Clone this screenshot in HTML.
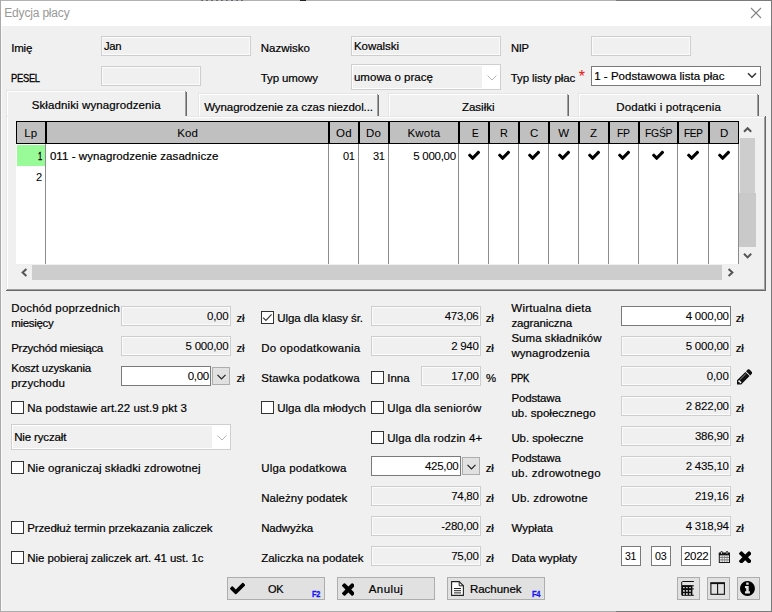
<!DOCTYPE html>
<html lang="pl"><head><meta charset="utf-8"><title>Edycja płacy</title>
<style>html,body{margin:0;padding:0;background:#f0f0f0;overflow:hidden}body{width:772px;height:612px;position:relative}</style></head><body>
<div style="position:absolute;left:0;top:0;width:772px;height:612px;background:#f0f0f0;overflow:hidden">
<div style="position:absolute;left:0px;top:0px;width:772px;height:26px;background:#fff"></div>
<div style="position:absolute;left:0px;top:0px;width:616px;height:1px;background:#b2b2b2"></div>
<div style="position:absolute;left:616px;top:0px;width:156px;height:1px;background:#7b7b7b"></div>
<div style="position:absolute;left:300px;top:0px;width:6px;height:1px;background:#222"></div>
<div style="position:absolute;left:201px;top:0px;width:44px;height:1px;background:repeating-linear-gradient(90deg,#6a6a78 0 2px,#b2b2b2 2px 5px)"></div>
<div style="position:absolute;left:771px;top:0px;width:1px;height:612px;background:#7b7b7b"></div>
<div style="position:absolute;left:0px;top:0px;width:1px;height:612px;background:#a9a9a9"></div>
<div style="position:absolute;left:1px;top:26px;width:1px;height:585px;background:#fafafa"></div>
<div style="position:absolute;left:0px;top:611px;width:616px;height:1px;background:#adadad"></div>
<div style="position:absolute;left:616px;top:611px;width:156px;height:1px;background:#7b7b7b"></div>
<div style="position:absolute;left:4.30px;top:6px;font:normal 12px/14px 'Liberation Sans', sans-serif;letter-spacing:-0.181px;white-space:nowrap;color:#999;-webkit-text-stroke:0.00px #999;">Edycja płacy</div>
<svg style="position:absolute;left:750px;top:7px" width="12" height="12" viewBox="0 0 12 12"><path d="M1 1 L11 11 M11 1 L1 11" stroke="#858585" stroke-width="1.1" fill="none"/></svg>
<div style="position:absolute;left:11.20px;top:41px;font:normal 11.5px/14px 'Liberation Sans', sans-serif;letter-spacing:-0.171px;white-space:nowrap;color:#000;-webkit-text-stroke:0.20px #000;">Imię</div>
<div style="position:absolute;left:101px;top:36px;width:150px;height:20px;box-sizing:border-box;border:1px solid #cecece;box-shadow:inset 0 0 0 1px #fbfbfb;background:#f0f0f0"></div>
<div style="position:absolute;left:103.95px;top:39px;font:normal 11.5px/14px 'Liberation Sans', sans-serif;letter-spacing:-0.300px;white-space:nowrap;color:#000;-webkit-text-stroke:0.20px #000;transform:scaleX(0.9803);transform-origin:0 0;">Jan</div>
<div style="position:absolute;left:260.70px;top:41px;font:normal 11.5px/14px 'Liberation Sans', sans-serif;letter-spacing:0.010px;white-space:nowrap;color:#000;-webkit-text-stroke:0.20px #000;">Nazwisko</div>
<div style="position:absolute;left:351px;top:36px;width:150px;height:20px;box-sizing:border-box;border:1px solid #cecece;box-shadow:inset 0 0 0 1px #fbfbfb;background:#f0f0f0"></div>
<div style="position:absolute;left:353.95px;top:39px;font:normal 11.5px/14px 'Liberation Sans', sans-serif;letter-spacing:-0.043px;white-space:nowrap;color:#000;-webkit-text-stroke:0.20px #000;">Kowalski</div>
<div style="position:absolute;left:510.70px;top:41px;font:normal 11.5px/14px 'Liberation Sans', sans-serif;letter-spacing:-0.300px;white-space:nowrap;color:#000;-webkit-text-stroke:0.20px #000;transform:scaleX(0.9742);transform-origin:0 0;">NIP</div>
<div style="position:absolute;left:591px;top:36px;width:100px;height:20px;box-sizing:border-box;border:1px solid #cecece;box-shadow:inset 0 0 0 1px #fbfbfb;background:#f0f0f0"></div>
<div style="position:absolute;left:11.20px;top:71px;font:normal 11.5px/14px 'Liberation Sans', sans-serif;letter-spacing:-0.300px;white-space:nowrap;color:#000;-webkit-text-stroke:0.35px #000;transform:scaleX(0.8095);transform-origin:0 0;">PESEL</div>
<div style="position:absolute;left:101px;top:66px;width:100px;height:20px;box-sizing:border-box;border:1px solid #cecece;box-shadow:inset 0 0 0 1px #fbfbfb;background:#f0f0f0"></div>
<div style="position:absolute;left:260.70px;top:71px;font:normal 11.5px/14px 'Liberation Sans', sans-serif;letter-spacing:-0.097px;white-space:nowrap;color:#000;-webkit-text-stroke:0.20px #000;">Typ umowy</div>
<div style="position:absolute;left:351px;top:64px;width:150px;height:26px;box-sizing:border-box;border:1px solid #cfcfcf;background:#fff"></div>
<div style="position:absolute;left:353px;top:66px;width:129px;height:22px;background:#f0f0f0"></div>
<svg style="position:absolute;left:487px;top:75px" width="10" height="6" viewBox="0 0 10 6"><path d="M0.6 0.6 L5 5 L9.4 0.6" stroke="#b5b5b5" stroke-width="1" fill="none"/></svg>
<div style="position:absolute;left:353.95px;top:70px;font:normal 11.5px/14px 'Liberation Sans', sans-serif;letter-spacing:0.033px;white-space:nowrap;color:#000;-webkit-text-stroke:0.20px #000;">umowa o pracę</div>
<div style="position:absolute;left:510.70px;top:71px;font:normal 11.5px/14px 'Liberation Sans', sans-serif;letter-spacing:-0.091px;white-space:nowrap;color:#000;-webkit-text-stroke:0.20px #000;">Typ listy płac</div>
<div style="position:absolute;left:578.80px;top:70px;font:normal 16px/14px 'Liberation Sans', sans-serif;letter-spacing:0.000px;white-space:nowrap;color:#f01010;-webkit-text-stroke:0.00px #f01010;">*</div>
<div style="position:absolute;left:591px;top:66px;width:170px;height:20px;box-sizing:border-box;border:1px solid #7a7a7a;background:#fff"></div>
<div style="position:absolute;left:594.20px;top:69px;font:normal 11.5px/14px 'Liberation Sans', sans-serif;letter-spacing:0.021px;white-space:nowrap;color:#000;-webkit-text-stroke:0.20px #000;">1 - Podstawowa lista płac</div>
<svg style="position:absolute;left:747px;top:72px" width="10" height="7" viewBox="0 0 10 7"><path d="M1 1.2 L5 5.2 L9 1.2" stroke="#303030" stroke-width="1.4" fill="none"/></svg>
<div style="position:absolute;left:6px;top:116px;width:760px;height:175px;background:#f0f0f0"></div>
<div style="position:absolute;left:6px;top:116px;width:758px;height:1px;background:#e6e6e6"></div>
<div style="position:absolute;left:7px;top:117px;width:757px;height:1px;background:#fff"></div>
<div style="position:absolute;left:6px;top:116px;width:1px;height:174px;background:#e6e6e6"></div>
<div style="position:absolute;left:7px;top:117px;width:1px;height:173px;background:#fff"></div>
<div style="position:absolute;left:764px;top:117px;width:1px;height:173px;background:#a0a0a0"></div>
<div style="position:absolute;left:765px;top:116px;width:1px;height:175px;background:#696969"></div>
<div style="position:absolute;left:7px;top:289px;width:758px;height:1px;background:#a0a0a0"></div>
<div style="position:absolute;left:6px;top:290px;width:760px;height:1px;background:#696969"></div>
<div style="position:absolute;left:198px;top:93px;width:181px;height:23px;background:#f0f0f0"></div>
<div style="position:absolute;left:198px;top:93px;width:179px;height:1px;background:#e6e6e6"></div>
<div style="position:absolute;left:199px;top:94px;width:178px;height:1px;background:#fff"></div>
<div style="position:absolute;left:198px;top:93px;width:1px;height:23px;background:#e6e6e6"></div>
<div style="position:absolute;left:199px;top:94px;width:1px;height:22px;background:#fff"></div>
<div style="position:absolute;left:377px;top:94px;width:1px;height:22px;background:#a0a0a0"></div>
<div style="position:absolute;left:378px;top:95px;width:1px;height:21px;background:#696969"></div>
<div style="position:absolute;left:388px;top:93px;width:181px;height:23px;background:#f0f0f0"></div>
<div style="position:absolute;left:388px;top:93px;width:179px;height:1px;background:#e6e6e6"></div>
<div style="position:absolute;left:389px;top:94px;width:178px;height:1px;background:#fff"></div>
<div style="position:absolute;left:388px;top:93px;width:1px;height:23px;background:#e6e6e6"></div>
<div style="position:absolute;left:389px;top:94px;width:1px;height:22px;background:#fff"></div>
<div style="position:absolute;left:567px;top:94px;width:1px;height:22px;background:#a0a0a0"></div>
<div style="position:absolute;left:568px;top:95px;width:1px;height:21px;background:#696969"></div>
<div style="position:absolute;left:578px;top:93px;width:181px;height:23px;background:#f0f0f0"></div>
<div style="position:absolute;left:578px;top:93px;width:179px;height:1px;background:#e6e6e6"></div>
<div style="position:absolute;left:579px;top:94px;width:178px;height:1px;background:#fff"></div>
<div style="position:absolute;left:578px;top:93px;width:1px;height:23px;background:#e6e6e6"></div>
<div style="position:absolute;left:579px;top:94px;width:1px;height:22px;background:#fff"></div>
<div style="position:absolute;left:757px;top:94px;width:1px;height:22px;background:#a0a0a0"></div>
<div style="position:absolute;left:758px;top:95px;width:1px;height:21px;background:#696969"></div>
<div style="position:absolute;left:6px;top:90px;width:181px;height:26px;background:#f0f0f0"></div>
<div style="position:absolute;left:6px;top:90px;width:179px;height:1px;background:#e6e6e6"></div>
<div style="position:absolute;left:7px;top:91px;width:178px;height:1px;background:#fff"></div>
<div style="position:absolute;left:6px;top:90px;width:1px;height:26px;background:#e6e6e6"></div>
<div style="position:absolute;left:7px;top:91px;width:1px;height:25px;background:#fff"></div>
<div style="position:absolute;left:185px;top:91px;width:1px;height:25px;background:#a0a0a0"></div>
<div style="position:absolute;left:186px;top:92px;width:1px;height:24px;background:#696969"></div>
<div style="position:absolute;left:8px;top:116px;width:178px;height:2px;background:#f0f0f0"></div>
<div style="position:absolute;left:31.70px;top:98px;font:normal 11.5px/14px 'Liberation Sans', sans-serif;letter-spacing:0.107px;white-space:nowrap;color:#000;-webkit-text-stroke:0.20px #000;">Składniki wynagrodzenia</div>
<div style="position:absolute;left:204.20px;top:100px;font:normal 11.5px/14px 'Liberation Sans', sans-serif;letter-spacing:-0.076px;white-space:nowrap;color:#000;-webkit-text-stroke:0.20px #000;">Wynagrodzenie za czas niezdol...</div>
<div style="position:absolute;left:461.95px;top:100px;font:normal 11.5px/14px 'Liberation Sans', sans-serif;letter-spacing:-0.006px;white-space:nowrap;color:#000;-webkit-text-stroke:0.20px #000;">Zasiłki</div>
<div style="position:absolute;left:616.20px;top:100px;font:normal 11.5px/14px 'Liberation Sans', sans-serif;letter-spacing:0.157px;white-space:nowrap;color:#000;-webkit-text-stroke:0.20px #000;">Dodatki i potrącenia</div>
<div style="position:absolute;left:16px;top:121px;width:723px;height:143px;background:#fff"></div>
<div style="position:absolute;left:16px;top:121px;width:30px;height:23px;box-sizing:border-box;border:1px solid #000;background:#c0c0c0"></div>
<div style="position:absolute;left:24.20px;top:126px;font:normal 11.5px/14px 'Liberation Sans', sans-serif;letter-spacing:0.252px;white-space:nowrap;color:#000;-webkit-text-stroke:0.05px #000;">Lp</div>
<div style="position:absolute;left:45px;top:144px;width:1px;height:120px;background:#8c8c8c"></div>
<div style="position:absolute;left:46px;top:121px;width:283px;height:23px;box-sizing:border-box;border:1px solid #000;background:#c0c0c0"></div>
<div style="position:absolute;left:177.30px;top:126px;font:normal 11.5px/14px 'Liberation Sans', sans-serif;letter-spacing:0.077px;white-space:nowrap;color:#000;-webkit-text-stroke:0.05px #000;">Kod</div>
<div style="position:absolute;left:328px;top:144px;width:1px;height:120px;background:#8c8c8c"></div>
<div style="position:absolute;left:329px;top:121px;width:30px;height:23px;box-sizing:border-box;border:1px solid #000;background:#c0c0c0"></div>
<div style="position:absolute;left:335.95px;top:126px;font:normal 11.5px/14px 'Liberation Sans', sans-serif;letter-spacing:0.353px;white-space:nowrap;color:#000;-webkit-text-stroke:0.05px #000;">Od</div>
<div style="position:absolute;left:358px;top:144px;width:1px;height:120px;background:#8c8c8c"></div>
<div style="position:absolute;left:359px;top:121px;width:30px;height:23px;box-sizing:border-box;border:1px solid #000;background:#c0c0c0"></div>
<div style="position:absolute;left:365.95px;top:126px;font:normal 11.5px/14px 'Liberation Sans', sans-serif;letter-spacing:0.173px;white-space:nowrap;color:#000;-webkit-text-stroke:0.05px #000;">Do</div>
<div style="position:absolute;left:388px;top:144px;width:1px;height:120px;background:#8c8c8c"></div>
<div style="position:absolute;left:389px;top:121px;width:70px;height:23px;box-sizing:border-box;border:1px solid #000;background:#c0c0c0"></div>
<div style="position:absolute;left:407.45px;top:126px;font:normal 11.5px/14px 'Liberation Sans', sans-serif;letter-spacing:0.216px;white-space:nowrap;color:#000;-webkit-text-stroke:0.05px #000;">Kwota</div>
<div style="position:absolute;left:458px;top:144px;width:1px;height:120px;background:#8c8c8c"></div>
<div style="position:absolute;left:459px;top:121px;width:30px;height:23px;box-sizing:border-box;border:1px solid #000;background:#c0c0c0"></div>
<div style="position:absolute;left:471.70px;top:126px;font:normal 11.5px/14px 'Liberation Sans', sans-serif;letter-spacing:-0.300px;white-space:nowrap;color:#000;-webkit-text-stroke:0.17px #000;transform:scaleX(0.8546);transform-origin:0 0;">E</div>
<div style="position:absolute;left:488px;top:144px;width:1px;height:120px;background:#8c8c8c"></div>
<div style="position:absolute;left:489px;top:121px;width:30px;height:23px;box-sizing:border-box;border:1px solid #000;background:#c0c0c0"></div>
<div style="position:absolute;left:499.95px;top:126px;font:normal 11.5px/14px 'Liberation Sans', sans-serif;letter-spacing:-0.300px;white-space:nowrap;color:#000;-webkit-text-stroke:0.05px #000;transform:scaleX(0.9423);transform-origin:0 0;">R</div>
<div style="position:absolute;left:518px;top:144px;width:1px;height:120px;background:#8c8c8c"></div>
<div style="position:absolute;left:519px;top:121px;width:30px;height:23px;box-sizing:border-box;border:1px solid #000;background:#c0c0c0"></div>
<div style="position:absolute;left:529.95px;top:126px;font:normal 11.5px/14px 'Liberation Sans', sans-serif;letter-spacing:-0.262px;white-space:nowrap;color:#000;-webkit-text-stroke:0.05px #000;">C</div>
<div style="position:absolute;left:548px;top:144px;width:1px;height:120px;background:#8c8c8c"></div>
<div style="position:absolute;left:549px;top:121px;width:30px;height:23px;box-sizing:border-box;border:1px solid #000;background:#c0c0c0"></div>
<div style="position:absolute;left:558.20px;top:126px;font:normal 11.5px/14px 'Liberation Sans', sans-serif;letter-spacing:0.191px;white-space:nowrap;color:#000;-webkit-text-stroke:0.05px #000;">W</div>
<div style="position:absolute;left:578px;top:144px;width:1px;height:120px;background:#8c8c8c"></div>
<div style="position:absolute;left:579px;top:121px;width:30px;height:23px;box-sizing:border-box;border:1px solid #000;background:#c0c0c0"></div>
<div style="position:absolute;left:589.95px;top:126px;font:normal 11.5px/14px 'Liberation Sans', sans-serif;letter-spacing:0.019px;white-space:nowrap;color:#000;-webkit-text-stroke:0.05px #000;">Z</div>
<div style="position:absolute;left:608px;top:144px;width:1px;height:120px;background:#8c8c8c"></div>
<div style="position:absolute;left:609px;top:121px;width:30px;height:23px;box-sizing:border-box;border:1px solid #000;background:#c0c0c0"></div>
<div style="position:absolute;left:616.95px;top:126px;font:normal 11.5px/14px 'Liberation Sans', sans-serif;letter-spacing:-0.300px;white-space:nowrap;color:#000;-webkit-text-stroke:0.05px #000;transform:scaleX(0.9076);transform-origin:0 0;">FP</div>
<div style="position:absolute;left:638px;top:144px;width:1px;height:120px;background:#8c8c8c"></div>
<div style="position:absolute;left:639px;top:121px;width:39px;height:23px;box-sizing:border-box;border:1px solid #000;background:#c0c0c0"></div>
<div style="position:absolute;left:644.90px;top:126px;font:normal 11.5px/14px 'Liberation Sans', sans-serif;letter-spacing:-0.300px;white-space:nowrap;color:#000;-webkit-text-stroke:0.05px #000;transform:scaleX(0.9066);transform-origin:0 0;">FGŚP</div>
<div style="position:absolute;left:677px;top:144px;width:1px;height:120px;background:#8c8c8c"></div>
<div style="position:absolute;left:678px;top:121px;width:31px;height:23px;box-sizing:border-box;border:1px solid #000;background:#c0c0c0"></div>
<div style="position:absolute;left:684.10px;top:126px;font:normal 11.5px/14px 'Liberation Sans', sans-serif;letter-spacing:-0.300px;white-space:nowrap;color:#000;-webkit-text-stroke:0.16px #000;transform:scaleX(0.8615);transform-origin:0 0;">FEP</div>
<div style="position:absolute;left:708px;top:144px;width:1px;height:120px;background:#8c8c8c"></div>
<div style="position:absolute;left:709px;top:121px;width:30px;height:23px;box-sizing:border-box;border:1px solid #000;background:#c0c0c0"></div>
<div style="position:absolute;left:719.95px;top:126px;font:normal 11.5px/14px 'Liberation Sans', sans-serif;letter-spacing:-0.262px;white-space:nowrap;color:#000;-webkit-text-stroke:0.05px #000;">D</div>
<div style="position:absolute;left:738px;top:144px;width:1px;height:120px;background:#8c8c8c"></div>
<div style="position:absolute;left:17px;top:145px;width:28px;height:21px;background:#98fb98"></div>
<div style="position:absolute;left:37.70px;top:149px;font:normal 11.5px/14px 'Liberation Sans', sans-serif;letter-spacing:-0.300px;white-space:nowrap;color:#000;-webkit-text-stroke:0.36px #000;transform:scaleX(0.6551);transform-origin:0 0;">1</div>
<div style="position:absolute;left:36.10px;top:170px;font:normal 11.5px/14px 'Liberation Sans', sans-serif;letter-spacing:-0.300px;white-space:nowrap;color:#000;-webkit-text-stroke:0.08px #000;transform:scaleX(0.9662);transform-origin:0 0;">2</div>
<div style="position:absolute;left:49.90px;top:149px;font:normal 11.5px/14px 'Liberation Sans', sans-serif;letter-spacing:0.065px;white-space:nowrap;color:#000;-webkit-text-stroke:0.20px #000;">011 - wynagrodzenie zasadnicze</div>
<div style="position:absolute;left:342.80px;top:149px;font:normal 11.5px/14px 'Liberation Sans', sans-serif;letter-spacing:-0.300px;white-space:nowrap;color:#000;-webkit-text-stroke:0.08px #000;transform:scaleX(0.9593);transform-origin:0 0;">01</div>
<div style="position:absolute;left:373.20px;top:149px;font:normal 11.5px/14px 'Liberation Sans', sans-serif;letter-spacing:-0.300px;white-space:nowrap;color:#000;-webkit-text-stroke:0.08px #000;transform:scaleX(0.9593);transform-origin:0 0;">31</div>
<div style="position:absolute;left:413.20px;top:149px;font:normal 11.5px/14px 'Liberation Sans', sans-serif;letter-spacing:-0.258px;white-space:nowrap;color:#000;-webkit-text-stroke:0.08px #000;">5 000,00</div>
<svg style="position:absolute;left:468.00px;top:149.9px" width="12.2" height="9.98" viewBox="121 254 1550 1268"><path d="M1671 566q0 40-28 68l-724 724-136 136q-28 28-68 28t-68-28l-136-136-362-362q-28-28-28-68t28-68l136-136q28-28 68-28t68 28l294 295 656-657q28-28 68-28t68 28l136 136q28 28 28 68z" fill="#000"/></svg>
<svg style="position:absolute;left:498.00px;top:149.9px" width="12.2" height="9.98" viewBox="121 254 1550 1268"><path d="M1671 566q0 40-28 68l-724 724-136 136q-28 28-68 28t-68-28l-136-136-362-362q-28-28-28-68t28-68l136-136q28-28 68-28t68 28l294 295 656-657q28-28 68-28t68 28l136 136q28 28 28 68z" fill="#000"/></svg>
<svg style="position:absolute;left:528.00px;top:149.9px" width="12.2" height="9.98" viewBox="121 254 1550 1268"><path d="M1671 566q0 40-28 68l-724 724-136 136q-28 28-68 28t-68-28l-136-136-362-362q-28-28-28-68t28-68l136-136q28-28 68-28t68 28l294 295 656-657q28-28 68-28t68 28l136 136q28 28 28 68z" fill="#000"/></svg>
<svg style="position:absolute;left:558.00px;top:149.9px" width="12.2" height="9.98" viewBox="121 254 1550 1268"><path d="M1671 566q0 40-28 68l-724 724-136 136q-28 28-68 28t-68-28l-136-136-362-362q-28-28-28-68t28-68l136-136q28-28 68-28t68 28l294 295 656-657q28-28 68-28t68 28l136 136q28 28 28 68z" fill="#000"/></svg>
<svg style="position:absolute;left:588.00px;top:149.9px" width="12.2" height="9.98" viewBox="121 254 1550 1268"><path d="M1671 566q0 40-28 68l-724 724-136 136q-28 28-68 28t-68-28l-136-136-362-362q-28-28-28-68t28-68l136-136q28-28 68-28t68 28l294 295 656-657q28-28 68-28t68 28l136 136q28 28 28 68z" fill="#000"/></svg>
<svg style="position:absolute;left:618.00px;top:149.9px" width="12.2" height="9.98" viewBox="121 254 1550 1268"><path d="M1671 566q0 40-28 68l-724 724-136 136q-28 28-68 28t-68-28l-136-136-362-362q-28-28-28-68t28-68l136-136q28-28 68-28t68 28l294 295 656-657q28-28 68-28t68 28l136 136q28 28 28 68z" fill="#000"/></svg>
<svg style="position:absolute;left:651.60px;top:149.9px" width="12.2" height="9.98" viewBox="121 254 1550 1268"><path d="M1671 566q0 40-28 68l-724 724-136 136q-28 28-68 28t-68-28l-136-136-362-362q-28-28-28-68t28-68l136-136q28-28 68-28t68 28l294 295 656-657q28-28 68-28t68 28l136 136q28 28 28 68z" fill="#000"/></svg>
<svg style="position:absolute;left:686.60px;top:149.9px" width="12.2" height="9.98" viewBox="121 254 1550 1268"><path d="M1671 566q0 40-28 68l-724 724-136 136q-28 28-68 28t-68-28l-136-136-362-362q-28-28-28-68t28-68l136-136q28-28 68-28t68 28l294 295 656-657q28-28 68-28t68 28l136 136q28 28 28 68z" fill="#000"/></svg>
<svg style="position:absolute;left:718.00px;top:149.9px" width="12.2" height="9.98" viewBox="121 254 1550 1268"><path d="M1671 566q0 40-28 68l-724 724-136 136q-28 28-68 28t-68-28l-136-136-362-362q-28-28-28-68t28-68l136-136q28-28 68-28t68 28l294 295 656-657q28-28 68-28t68 28l136 136q28 28 28 68z" fill="#000"/></svg>
<div style="position:absolute;left:739px;top:121px;width:17px;height:143px;background:#f0f0f0"></div>
<div style="position:absolute;left:740px;top:138px;width:15px;height:55px;background:#cdcdcd"></div>
<div style="position:absolute;left:739px;top:193px;width:17px;height:54px;background:#c9c9c9"></div>
<svg style="position:absolute;left:743px;top:126px" width="9" height="7" viewBox="0 0 9 7"><path d="M1 5.8 L4.6 2.2 L8.2 5.8" stroke="#555" stroke-width="2" fill="none"/></svg>
<svg style="position:absolute;left:743px;top:252px" width="9" height="8" viewBox="0 0 9 8"><path d="M1 1.8 L4.6 5.4 L8.2 1.8" stroke="#555" stroke-width="2" fill="none"/></svg>
<div style="position:absolute;left:16px;top:264px;width:740px;height:17px;background:#f0f0f0"></div>
<div style="position:absolute;left:32px;top:265px;width:690px;height:15px;background:#cdcdcd"></div>
<svg style="position:absolute;left:20px;top:268px" width="8" height="9" viewBox="0 0 8 9"><path d="M6.4 0.9 L2.6 4.5 L6.4 8.1" stroke="#555" stroke-width="2" fill="none"/></svg>
<svg style="position:absolute;left:727px;top:268px" width="8" height="9" viewBox="0 0 8 9"><path d="M1.6 0.9 L5.4 4.5 L1.6 8.1" stroke="#555" stroke-width="2" fill="none"/></svg>
<div style="position:absolute;left:11.20px;top:301px;font:normal 11.5px/14px 'Liberation Sans', sans-serif;letter-spacing:0.183px;white-space:nowrap;color:#000;-webkit-text-stroke:0.20px #000;">Dochód poprzednich</div>
<div style="position:absolute;left:11.20px;top:316px;font:normal 11.5px/14px 'Liberation Sans', sans-serif;letter-spacing:-0.300px;white-space:nowrap;color:#000;-webkit-text-stroke:0.20px #000;">miesięcy</div>
<div style="position:absolute;left:121px;top:306px;width:110px;height:20px;box-sizing:border-box;border:1px solid #cecece;box-shadow:inset 0 0 0 1px #fbfbfb;background:#f0f0f0"></div>
<div style="position:absolute;left:207.00px;top:309px;font:normal 11.5px/14px 'Liberation Sans', sans-serif;letter-spacing:-0.248px;white-space:nowrap;color:#000;-webkit-text-stroke:0.08px #000;">0,00</div>
<div style="position:absolute;left:236.45px;top:311px;font:normal 11.5px/14px 'Liberation Sans', sans-serif;letter-spacing:-0.156px;white-space:nowrap;color:#000;-webkit-text-stroke:0.20px #000;">zł</div>
<div style="position:absolute;left:11.20px;top:341px;font:normal 11.5px/14px 'Liberation Sans', sans-serif;letter-spacing:-0.277px;white-space:nowrap;color:#000;-webkit-text-stroke:0.20px #000;">Przychód miesiąca</div>
<div style="position:absolute;left:121px;top:336px;width:110px;height:20px;box-sizing:border-box;border:1px solid #cecece;box-shadow:inset 0 0 0 1px #fbfbfb;background:#f0f0f0"></div>
<div style="position:absolute;left:185.60px;top:339px;font:normal 11.5px/14px 'Liberation Sans', sans-serif;letter-spacing:-0.246px;white-space:nowrap;color:#000;-webkit-text-stroke:0.08px #000;">5 000,00</div>
<div style="position:absolute;left:236.45px;top:341px;font:normal 11.5px/14px 'Liberation Sans', sans-serif;letter-spacing:-0.156px;white-space:nowrap;color:#000;-webkit-text-stroke:0.20px #000;">zł</div>
<div style="position:absolute;left:11.20px;top:361px;font:normal 11.5px/14px 'Liberation Sans', sans-serif;letter-spacing:-0.221px;white-space:nowrap;color:#000;-webkit-text-stroke:0.20px #000;">Koszt uzyskania</div>
<div style="position:absolute;left:11.20px;top:376px;font:normal 11.5px/14px 'Liberation Sans', sans-serif;letter-spacing:0.082px;white-space:nowrap;color:#000;-webkit-text-stroke:0.20px #000;">przychodu</div>
<div style="position:absolute;left:121px;top:366px;width:90px;height:20px;box-sizing:border-box;border:1px solid #7a7a7a;background:#fff"></div>
<div style="position:absolute;left:187.70px;top:369px;font:normal 11.5px/14px 'Liberation Sans', sans-serif;letter-spacing:-0.273px;white-space:nowrap;color:#000;-webkit-text-stroke:0.08px #000;">0,00</div>
<div style="position:absolute;left:212px;top:367px;width:18px;height:18px;box-sizing:border-box;border:1px solid #adadad;background:#e1e1e1"><svg width="9" height="6" viewBox="0 0 9 6" style="position:absolute;left:3.7px;top:5.5px"><path d="M0.5 0.8 L4.5 4.8 L8.5 0.8" stroke="#222" stroke-width="1.2" fill="none"/></svg></div>
<div style="position:absolute;left:236.45px;top:371px;font:normal 11.5px/14px 'Liberation Sans', sans-serif;letter-spacing:-0.156px;white-space:nowrap;color:#000;-webkit-text-stroke:0.20px #000;">zł</div>
<div style="position:absolute;left:11px;top:401px;width:13px;height:13px;box-sizing:border-box;border:1px solid #333;background:#fff"></div>
<div style="position:absolute;left:27.20px;top:401px;font:normal 11.5px/14px 'Liberation Sans', sans-serif;letter-spacing:0.040px;white-space:nowrap;color:#000;-webkit-text-stroke:0.20px #000;">Na podstawie art.22 ust.9 pkt 3</div>
<div style="position:absolute;left:11px;top:424px;width:220px;height:26px;box-sizing:border-box;border:1px solid #cfcfcf;background:#fff"></div>
<div style="position:absolute;left:13px;top:426px;width:199px;height:22px;background:#f0f0f0"></div>
<svg style="position:absolute;left:217px;top:435px" width="10" height="6" viewBox="0 0 10 6"><path d="M0.6 0.6 L5 5 L9.4 0.6" stroke="#b5b5b5" stroke-width="1" fill="none"/></svg>
<div style="position:absolute;left:14.20px;top:430px;font:normal 11.5px/14px 'Liberation Sans', sans-serif;letter-spacing:-0.149px;white-space:nowrap;color:#000;-webkit-text-stroke:0.20px #000;">Nie ryczałt</div>
<div style="position:absolute;left:11px;top:461px;width:13px;height:13px;box-sizing:border-box;border:1px solid #333;background:#fff"></div>
<div style="position:absolute;left:27.20px;top:461px;font:normal 11.5px/14px 'Liberation Sans', sans-serif;letter-spacing:0.108px;white-space:nowrap;color:#000;-webkit-text-stroke:0.20px #000;">Nie ograniczaj składki zdrowotnej</div>
<div style="position:absolute;left:11px;top:521px;width:13px;height:13px;box-sizing:border-box;border:1px solid #333;background:#fff"></div>
<div style="position:absolute;left:27.20px;top:521px;font:normal 11.5px/14px 'Liberation Sans', sans-serif;letter-spacing:-0.108px;white-space:nowrap;color:#000;-webkit-text-stroke:0.20px #000;">Przedłuż termin przekazania zaliczek</div>
<div style="position:absolute;left:11px;top:551px;width:13px;height:13px;box-sizing:border-box;border:1px solid #333;background:#fff"></div>
<div style="position:absolute;left:27.20px;top:551px;font:normal 11.5px/14px 'Liberation Sans', sans-serif;letter-spacing:-0.055px;white-space:nowrap;color:#000;-webkit-text-stroke:0.20px #000;">Nie pobieraj zaliczek art. 41 ust. 1c</div>
<div style="position:absolute;left:261px;top:311px;width:13px;height:13px;box-sizing:border-box;border:1px solid #333;background:#fff"><svg width="11" height="11" viewBox="0 0 11 11" style="position:absolute;left:0;top:0"><path d="M1.1 5.6 L3.9 8.4 L9.6 2.3" stroke="#3a3a3a" stroke-width="1.2" fill="none"/></svg></div>
<div style="position:absolute;left:277.20px;top:311px;font:normal 11.5px/14px 'Liberation Sans', sans-serif;letter-spacing:-0.063px;white-space:nowrap;color:#000;-webkit-text-stroke:0.20px #000;">Ulga dla klasy śr.</div>
<div style="position:absolute;left:371px;top:306px;width:110px;height:20px;box-sizing:border-box;border:1px solid #cecece;box-shadow:inset 0 0 0 1px #fbfbfb;background:#f0f0f0"></div>
<div style="position:absolute;left:444.70px;top:309px;font:normal 11.5px/14px 'Liberation Sans', sans-serif;letter-spacing:-0.231px;white-space:nowrap;color:#000;-webkit-text-stroke:0.08px #000;">473,06</div>
<div style="position:absolute;left:485.70px;top:311px;font:normal 11.5px/14px 'Liberation Sans', sans-serif;letter-spacing:-0.156px;white-space:nowrap;color:#000;-webkit-text-stroke:0.20px #000;">zł</div>
<div style="position:absolute;left:261.20px;top:341px;font:normal 11.5px/14px 'Liberation Sans', sans-serif;letter-spacing:0.252px;white-space:nowrap;color:#000;-webkit-text-stroke:0.20px #000;">Do opodatkowania</div>
<div style="position:absolute;left:371px;top:336px;width:110px;height:20px;box-sizing:border-box;border:1px solid #cecece;box-shadow:inset 0 0 0 1px #fbfbfb;background:#f0f0f0"></div>
<div style="position:absolute;left:451.20px;top:339px;font:normal 11.5px/14px 'Liberation Sans', sans-serif;letter-spacing:-0.296px;white-space:nowrap;color:#000;-webkit-text-stroke:0.08px #000;">2 940</div>
<div style="position:absolute;left:485.70px;top:341px;font:normal 11.5px/14px 'Liberation Sans', sans-serif;letter-spacing:-0.156px;white-space:nowrap;color:#000;-webkit-text-stroke:0.20px #000;">zł</div>
<div style="position:absolute;left:261.20px;top:371px;font:normal 11.5px/14px 'Liberation Sans', sans-serif;letter-spacing:0.125px;white-space:nowrap;color:#000;-webkit-text-stroke:0.20px #000;">Stawka podatkowa</div>
<div style="position:absolute;left:371px;top:371px;width:13px;height:13px;box-sizing:border-box;border:1px solid #333;background:#fff"></div>
<div style="position:absolute;left:387.20px;top:371px;font:normal 11.5px/14px 'Liberation Sans', sans-serif;letter-spacing:0.040px;white-space:nowrap;color:#000;-webkit-text-stroke:0.20px #000;">Inna</div>
<div style="position:absolute;left:421px;top:366px;width:60px;height:20px;box-sizing:border-box;border:1px solid #cecece;box-shadow:inset 0 0 0 1px #fbfbfb;background:#f0f0f0"></div>
<div style="position:absolute;left:451.20px;top:369px;font:normal 11.5px/14px 'Liberation Sans', sans-serif;letter-spacing:-0.296px;white-space:nowrap;color:#000;-webkit-text-stroke:0.08px #000;">17,00</div>
<div style="position:absolute;left:485.70px;top:371px;font:normal 11.5px/14px 'Liberation Sans', sans-serif;letter-spacing:-0.300px;white-space:nowrap;color:#000;-webkit-text-stroke:0.20px #000;transform:scaleX(0.9865);transform-origin:0 0;">%</div>
<div style="position:absolute;left:261px;top:401px;width:13px;height:13px;box-sizing:border-box;border:1px solid #333;background:#fff"></div>
<div style="position:absolute;left:277.20px;top:401px;font:normal 11.5px/14px 'Liberation Sans', sans-serif;letter-spacing:0.036px;white-space:nowrap;color:#000;-webkit-text-stroke:0.20px #000;">Ulga dla młodych</div>
<div style="position:absolute;left:371px;top:401px;width:13px;height:13px;box-sizing:border-box;border:1px solid #333;background:#fff"></div>
<div style="position:absolute;left:387.20px;top:401px;font:normal 11.5px/14px 'Liberation Sans', sans-serif;letter-spacing:0.169px;white-space:nowrap;color:#000;-webkit-text-stroke:0.20px #000;">Ulga dla seniorów</div>
<div style="position:absolute;left:371px;top:431px;width:13px;height:13px;box-sizing:border-box;border:1px solid #333;background:#fff"></div>
<div style="position:absolute;left:387.20px;top:431px;font:normal 11.5px/14px 'Liberation Sans', sans-serif;letter-spacing:0.112px;white-space:nowrap;color:#000;-webkit-text-stroke:0.20px #000;">Ulga dla rodzin 4+</div>
<div style="position:absolute;left:261.20px;top:461px;font:normal 11.5px/14px 'Liberation Sans', sans-serif;letter-spacing:0.219px;white-space:nowrap;color:#000;-webkit-text-stroke:0.20px #000;">Ulga podatkowa</div>
<div style="position:absolute;left:371px;top:456px;width:90px;height:20px;box-sizing:border-box;border:1px solid #7a7a7a;background:#fff"></div>
<div style="position:absolute;left:424.95px;top:459px;font:normal 11.5px/14px 'Liberation Sans', sans-serif;letter-spacing:-0.273px;white-space:nowrap;color:#000;-webkit-text-stroke:0.08px #000;">425,00</div>
<div style="position:absolute;left:462px;top:457px;width:18px;height:18px;box-sizing:border-box;border:1px solid #adadad;background:#e1e1e1"><svg width="9" height="6" viewBox="0 0 9 6" style="position:absolute;left:3.7px;top:5.5px"><path d="M0.5 0.8 L4.5 4.8 L8.5 0.8" stroke="#222" stroke-width="1.2" fill="none"/></svg></div>
<div style="position:absolute;left:485.70px;top:461px;font:normal 11.5px/14px 'Liberation Sans', sans-serif;letter-spacing:-0.156px;white-space:nowrap;color:#000;-webkit-text-stroke:0.20px #000;">zł</div>
<div style="position:absolute;left:261.20px;top:491px;font:normal 11.5px/14px 'Liberation Sans', sans-serif;letter-spacing:0.025px;white-space:nowrap;color:#000;-webkit-text-stroke:0.20px #000;">Należny podatek</div>
<div style="position:absolute;left:371px;top:486px;width:110px;height:20px;box-sizing:border-box;border:1px solid #cecece;box-shadow:inset 0 0 0 1px #fbfbfb;background:#f0f0f0"></div>
<div style="position:absolute;left:451.20px;top:489px;font:normal 11.5px/14px 'Liberation Sans', sans-serif;letter-spacing:-0.296px;white-space:nowrap;color:#000;-webkit-text-stroke:0.08px #000;">74,80</div>
<div style="position:absolute;left:485.70px;top:491px;font:normal 11.5px/14px 'Liberation Sans', sans-serif;letter-spacing:-0.156px;white-space:nowrap;color:#000;-webkit-text-stroke:0.20px #000;">zł</div>
<div style="position:absolute;left:261.20px;top:521px;font:normal 11.5px/14px 'Liberation Sans', sans-serif;letter-spacing:-0.158px;white-space:nowrap;color:#000;-webkit-text-stroke:0.20px #000;">Nadwyżka</div>
<div style="position:absolute;left:371px;top:516px;width:110px;height:20px;box-sizing:border-box;border:1px solid #cecece;box-shadow:inset 0 0 0 1px #fbfbfb;background:#f0f0f0"></div>
<div style="position:absolute;left:441.20px;top:519px;font:normal 11.5px/14px 'Liberation Sans', sans-serif;letter-spacing:-0.245px;white-space:nowrap;color:#000;-webkit-text-stroke:0.08px #000;">-280,00</div>
<div style="position:absolute;left:485.70px;top:521px;font:normal 11.5px/14px 'Liberation Sans', sans-serif;letter-spacing:-0.156px;white-space:nowrap;color:#000;-webkit-text-stroke:0.20px #000;">zł</div>
<div style="position:absolute;left:261.20px;top:551px;font:normal 11.5px/14px 'Liberation Sans', sans-serif;letter-spacing:0.000px;white-space:nowrap;color:#000;-webkit-text-stroke:0.20px #000;">Zaliczka na podatek</div>
<div style="position:absolute;left:371px;top:546px;width:110px;height:20px;box-sizing:border-box;border:1px solid #cecece;box-shadow:inset 0 0 0 1px #fbfbfb;background:#f0f0f0"></div>
<div style="position:absolute;left:451.20px;top:549px;font:normal 11.5px/14px 'Liberation Sans', sans-serif;letter-spacing:-0.296px;white-space:nowrap;color:#000;-webkit-text-stroke:0.08px #000;">75,00</div>
<div style="position:absolute;left:485.70px;top:551px;font:normal 11.5px/14px 'Liberation Sans', sans-serif;letter-spacing:-0.156px;white-space:nowrap;color:#000;-webkit-text-stroke:0.20px #000;">zł</div>
<div style="position:absolute;left:511.30px;top:301px;font:normal 11.5px/14px 'Liberation Sans', sans-serif;letter-spacing:0.225px;white-space:nowrap;color:#000;-webkit-text-stroke:0.20px #000;">Wirtualna dieta</div>
<div style="position:absolute;left:511.40px;top:316px;font:normal 11.5px/14px 'Liberation Sans', sans-serif;letter-spacing:-0.129px;white-space:nowrap;color:#000;-webkit-text-stroke:0.20px #000;">zagraniczna</div>
<div style="position:absolute;left:621px;top:306px;width:110px;height:20px;box-sizing:border-box;border:1px solid #7a7a7a;background:#fff"></div>
<div style="position:absolute;left:685.70px;top:309px;font:normal 11.5px/14px 'Liberation Sans', sans-serif;letter-spacing:-0.214px;white-space:nowrap;color:#000;-webkit-text-stroke:0.08px #000;">4 000,00</div>
<div style="position:absolute;left:735.70px;top:311px;font:normal 11.5px/14px 'Liberation Sans', sans-serif;letter-spacing:-0.156px;white-space:nowrap;color:#000;-webkit-text-stroke:0.20px #000;">zł</div>
<div style="position:absolute;left:511.40px;top:331px;font:normal 11.5px/14px 'Liberation Sans', sans-serif;letter-spacing:0.048px;white-space:nowrap;color:#000;-webkit-text-stroke:0.20px #000;">Suma składników</div>
<div style="position:absolute;left:511.40px;top:346px;font:normal 11.5px/14px 'Liberation Sans', sans-serif;letter-spacing:0.065px;white-space:nowrap;color:#000;-webkit-text-stroke:0.20px #000;">wynagrodzenia</div>
<div style="position:absolute;left:621px;top:336px;width:110px;height:20px;box-sizing:border-box;border:1px solid #cecece;box-shadow:inset 0 0 0 1px #fbfbfb;background:#f0f0f0"></div>
<div style="position:absolute;left:685.70px;top:339px;font:normal 11.5px/14px 'Liberation Sans', sans-serif;letter-spacing:-0.214px;white-space:nowrap;color:#000;-webkit-text-stroke:0.08px #000;">5 000,00</div>
<div style="position:absolute;left:735.70px;top:341px;font:normal 11.5px/14px 'Liberation Sans', sans-serif;letter-spacing:-0.156px;white-space:nowrap;color:#000;-webkit-text-stroke:0.20px #000;">zł</div>
<div style="position:absolute;left:511.40px;top:371px;font:normal 11.5px/14px 'Liberation Sans', sans-serif;letter-spacing:-0.300px;white-space:nowrap;color:#000;-webkit-text-stroke:0.35px #000;transform:scaleX(0.8184);transform-origin:0 0;">PPK</div>
<div style="position:absolute;left:621px;top:366px;width:110px;height:20px;box-sizing:border-box;border:1px solid #cecece;box-shadow:inset 0 0 0 1px #fbfbfb;background:#f0f0f0"></div>
<div style="position:absolute;left:706.70px;top:369px;font:normal 11.5px/14px 'Liberation Sans', sans-serif;letter-spacing:-0.085px;white-space:nowrap;color:#000;-webkit-text-stroke:0.08px #000;">0,00</div>
<div style="position:absolute;left:511.40px;top:391px;font:normal 11.5px/14px 'Liberation Sans', sans-serif;letter-spacing:-0.146px;white-space:nowrap;color:#000;-webkit-text-stroke:0.20px #000;">Podstawa</div>
<div style="position:absolute;left:511.40px;top:406px;font:normal 11.5px/14px 'Liberation Sans', sans-serif;letter-spacing:0.029px;white-space:nowrap;color:#000;-webkit-text-stroke:0.20px #000;">ub. społecznego</div>
<div style="position:absolute;left:621px;top:396px;width:110px;height:20px;box-sizing:border-box;border:1px solid #cecece;box-shadow:inset 0 0 0 1px #fbfbfb;background:#f0f0f0"></div>
<div style="position:absolute;left:685.70px;top:399px;font:normal 11.5px/14px 'Liberation Sans', sans-serif;letter-spacing:-0.214px;white-space:nowrap;color:#000;-webkit-text-stroke:0.08px #000;">2 822,00</div>
<div style="position:absolute;left:735.70px;top:401px;font:normal 11.5px/14px 'Liberation Sans', sans-serif;letter-spacing:-0.156px;white-space:nowrap;color:#000;-webkit-text-stroke:0.20px #000;">zł</div>
<div style="position:absolute;left:511.40px;top:431px;font:normal 11.5px/14px 'Liberation Sans', sans-serif;letter-spacing:-0.075px;white-space:nowrap;color:#000;-webkit-text-stroke:0.20px #000;">Ub. społeczne</div>
<div style="position:absolute;left:621px;top:426px;width:110px;height:20px;box-sizing:border-box;border:1px solid #cecece;box-shadow:inset 0 0 0 1px #fbfbfb;background:#f0f0f0"></div>
<div style="position:absolute;left:694.95px;top:429px;font:normal 11.5px/14px 'Liberation Sans', sans-serif;letter-spacing:-0.231px;white-space:nowrap;color:#000;-webkit-text-stroke:0.08px #000;">386,90</div>
<div style="position:absolute;left:735.70px;top:431px;font:normal 11.5px/14px 'Liberation Sans', sans-serif;letter-spacing:-0.156px;white-space:nowrap;color:#000;-webkit-text-stroke:0.20px #000;">zł</div>
<div style="position:absolute;left:511.40px;top:451px;font:normal 11.5px/14px 'Liberation Sans', sans-serif;letter-spacing:-0.146px;white-space:nowrap;color:#000;-webkit-text-stroke:0.20px #000;">Podstawa</div>
<div style="position:absolute;left:511.40px;top:466px;font:normal 11.5px/14px 'Liberation Sans', sans-serif;letter-spacing:0.297px;white-space:nowrap;color:#000;-webkit-text-stroke:0.20px #000;">ub. zdrowotnego</div>
<div style="position:absolute;left:621px;top:456px;width:110px;height:20px;box-sizing:border-box;border:1px solid #cecece;box-shadow:inset 0 0 0 1px #fbfbfb;background:#f0f0f0"></div>
<div style="position:absolute;left:685.70px;top:459px;font:normal 11.5px/14px 'Liberation Sans', sans-serif;letter-spacing:-0.214px;white-space:nowrap;color:#000;-webkit-text-stroke:0.08px #000;">2 435,10</div>
<div style="position:absolute;left:735.70px;top:461px;font:normal 11.5px/14px 'Liberation Sans', sans-serif;letter-spacing:-0.156px;white-space:nowrap;color:#000;-webkit-text-stroke:0.20px #000;">zł</div>
<div style="position:absolute;left:511.40px;top:491px;font:normal 11.5px/14px 'Liberation Sans', sans-serif;letter-spacing:0.180px;white-space:nowrap;color:#000;-webkit-text-stroke:0.20px #000;">Ub. zdrowotne</div>
<div style="position:absolute;left:621px;top:486px;width:110px;height:20px;box-sizing:border-box;border:1px solid #cecece;box-shadow:inset 0 0 0 1px #fbfbfb;background:#f0f0f0"></div>
<div style="position:absolute;left:694.95px;top:489px;font:normal 11.5px/14px 'Liberation Sans', sans-serif;letter-spacing:-0.231px;white-space:nowrap;color:#000;-webkit-text-stroke:0.08px #000;">219,16</div>
<div style="position:absolute;left:735.70px;top:491px;font:normal 11.5px/14px 'Liberation Sans', sans-serif;letter-spacing:-0.156px;white-space:nowrap;color:#000;-webkit-text-stroke:0.20px #000;">zł</div>
<div style="position:absolute;left:511.40px;top:521px;font:normal 11.5px/14px 'Liberation Sans', sans-serif;letter-spacing:0.021px;white-space:nowrap;color:#000;-webkit-text-stroke:0.20px #000;">Wypłata</div>
<div style="position:absolute;left:621px;top:516px;width:110px;height:20px;box-sizing:border-box;border:1px solid #cecece;box-shadow:inset 0 0 0 1px #fbfbfb;background:#f0f0f0"></div>
<div style="position:absolute;left:685.70px;top:519px;font:normal 11.5px/14px 'Liberation Sans', sans-serif;letter-spacing:-0.214px;white-space:nowrap;color:#000;-webkit-text-stroke:0.08px #000;">4 318,94</div>
<div style="position:absolute;left:735.70px;top:521px;font:normal 11.5px/14px 'Liberation Sans', sans-serif;letter-spacing:-0.156px;white-space:nowrap;color:#000;-webkit-text-stroke:0.20px #000;">zł</div>
<div style="position:absolute;left:511.40px;top:551px;font:normal 11.5px/14px 'Liberation Sans', sans-serif;letter-spacing:-0.020px;white-space:nowrap;color:#000;-webkit-text-stroke:0.20px #000;">Data wypłaty</div>
<div style="position:absolute;left:621px;top:546px;width:20px;height:20px;box-sizing:border-box;border:1px solid #7a7a7a;background:#fff"></div>
<div style="position:absolute;left:625.10px;top:549px;font:normal 11.5px/14px 'Liberation Sans', sans-serif;letter-spacing:-0.300px;white-space:nowrap;color:#000;-webkit-text-stroke:0.08px #000;transform:scaleX(0.9101);transform-origin:0 0;">31</div>
<div style="position:absolute;left:651px;top:546px;width:20px;height:20px;box-sizing:border-box;border:1px solid #7a7a7a;background:#fff"></div>
<div style="position:absolute;left:655.20px;top:549px;font:normal 11.5px/14px 'Liberation Sans', sans-serif;letter-spacing:-0.300px;white-space:nowrap;color:#000;-webkit-text-stroke:0.08px #000;transform:scaleX(0.9265);transform-origin:0 0;">03</div>
<div style="position:absolute;left:681px;top:546px;width:30px;height:20px;box-sizing:border-box;border:1px solid #7a7a7a;background:#fff"></div>
<div style="position:absolute;left:683.95px;top:549px;font:normal 11.5px/14px 'Liberation Sans', sans-serif;letter-spacing:-0.300px;white-space:nowrap;color:#000;-webkit-text-stroke:0.08px #000;">2022</div>
<svg style="position:absolute;left:736.5px;top:369px" width="15.5" height="15.5" viewBox="0 128 1536 1536"><path d="M363 1536l91-91-235-235-91 91v107h128v128h107zm523-928q0-22-22-22-10 0-17 7l-542 542q-7 7-7 17 0 22 22 22 10 0 17-7l542-542q7-7 7-17zm-54-192l416 416-832 832h-416v-416zm683 96q0 53-37 90l-166 166-416-416 166-165q36-38 90-38 53 0 91 38l235 234q37 39 37 91z" fill="#111"/></svg>
<svg style="position:absolute;left:718px;top:550px" width="13" height="14" viewBox="718 550 13 14">
<rect x="719.3" y="553.2" width="10.2" height="9.3" fill="none" stroke="#161616" stroke-width="1"/>
<rect x="718.9" y="552.7" width="11" height="2.7" fill="#161616"/>
<ellipse cx="721.6" cy="552.9" rx="1.25" ry="1.9" fill="#161616"/><ellipse cx="727" cy="552.9" rx="1.25" ry="1.9" fill="#161616"/>
<ellipse cx="721.6" cy="552.9" rx="0.5" ry="1.1" fill="#f0f0f0"/><ellipse cx="727" cy="552.9" rx="0.5" ry="1.1" fill="#f0f0f0"/>
<path d="M720 557.4H729M720 559.9H729" stroke="#555" stroke-width="0.8" fill="none"/>
<path d="M722.2 556V562M724.6 556V562M727 556V562" stroke="#777" stroke-width="0.7" fill="none"/>
</svg>
<svg style="position:absolute;left:738.9px;top:550.7px" width="12.4" height="12.4" viewBox="302 350 1188 1188"><path d="M1490 1322q0 40-28 68l-136 136q-28 28-68 28t-68-28l-294-294-294 294q-28 28-68 28t-68-28l-136-136q-28-28-28-68t28-68l294-294-294-294q-28-28-28-68t28-68l136-136q28-28 68-28t68 28l294 294 294-294q28-28 68-28t68 28l136 136q28 28 28 68t-28 68l-294 294 294 294q28 28 28 68z" fill="#000"/></svg>
<div style="position:absolute;left:227px;top:577px;width:98px;height:23px;box-sizing:border-box;border:1px solid #adadad;background:#e1e1e1"></div>
<svg style="position:absolute;left:229.95px;top:582.4px" width="15.1" height="12.35" viewBox="121 254 1550 1268"><path d="M1671 566q0 40-28 68l-724 724-136 136q-28 28-68 28t-68-28l-136-136-362-362q-28-28-28-68t28-68l136-136q28-28 68-28t68 28l294 295 656-657q28-28 68-28t68 28l136 136q28 28 28 68z" fill="#000"/></svg>
<div style="position:absolute;left:268.20px;top:581.5px;font:normal 11.5px/14px 'Liberation Sans', sans-serif;letter-spacing:-0.300px;white-space:nowrap;color:#000;-webkit-text-stroke:0.20px #000;transform:scaleX(0.9548);transform-origin:0 0;">OK</div>
<div style="position:absolute;left:311.70px;top:587px;font:bold 8.5px/14px 'Liberation Sans', sans-serif;letter-spacing:-0.300px;white-space:nowrap;color:#1414ff;-webkit-text-stroke:0.31px #1414ff;transform:scaleX(0.8582);transform-origin:0 0;">F2</div>
<div style="position:absolute;left:337px;top:577px;width:98px;height:23px;box-sizing:border-box;border:1px solid #adadad;background:#e1e1e1"></div>
<svg style="position:absolute;left:341.7px;top:582.9px" width="12.7" height="12.7" viewBox="302 350 1188 1188"><path d="M1490 1322q0 40-28 68l-136 136q-28 28-68 28t-68-28l-294-294-294 294q-28 28-68 28t-68-28l-136-136q-28-28-28-68t28-68l294-294-294-294q-28-28-28-68t28-68l136-136q28-28 68-28t68 28l294 294 294-294q28-28 68-28t68 28l136 136q28 28 28 68t-28 68l-294 294 294 294q28 28 28 68z" fill="#000"/></svg>
<div style="position:absolute;left:368.70px;top:581.5px;font:normal 11.5px/14px 'Liberation Sans', sans-serif;letter-spacing:0.450px;white-space:nowrap;color:#000;-webkit-text-stroke:0.20px #000;">Anuluj</div>
<div style="position:absolute;left:447px;top:577px;width:98px;height:23px;box-sizing:border-box;border:1px solid #adadad;background:#e1e1e1"></div>
<svg style="position:absolute;left:451px;top:581px" width="13" height="15" viewBox="0 0 13 15">
<path d="M0.6 0.6H8.2L12.4 4.8V14.4H0.6Z" fill="#fff" stroke="#222" stroke-width="1.1"/>
<path d="M8.2 0.6V4.8H12.4" fill="none" stroke="#222" stroke-width="1"/>
<path d="M3 7.5H10M3 9.7H10M3 11.9H10" stroke="#222" stroke-width="1" fill="none"/>
</svg>
<div style="position:absolute;left:469.95px;top:581.5px;font:normal 11.5px/14px 'Liberation Sans', sans-serif;letter-spacing:-0.031px;white-space:nowrap;color:#000;-webkit-text-stroke:0.20px #000;">Rachunek</div>
<div style="position:absolute;left:531.70px;top:587px;font:bold 8.5px/14px 'Liberation Sans', sans-serif;letter-spacing:-0.300px;white-space:nowrap;color:#1414ff;-webkit-text-stroke:0.30px #1414ff;transform:scaleX(0.8797);transform-origin:0 0;">F4</div>
<div style="position:absolute;left:677px;top:577px;width:23px;height:23px;box-sizing:border-box;border:1px solid #adadad;background:#e1e1e1"></div>
<svg style="position:absolute;left:680px;top:580px" width="16" height="18" viewBox="680 580 16 18">
<path d="M693.9 581.5H682.3M681.7 581.8V595.3" stroke="#111" stroke-width="1" fill="none"/>
<rect x="682" y="585.3" width="10.4" height="10.5" fill="#0a0a0a"/>
<path d="M682 585.8H693.9M692 588.9H693.9M692 595.3H693.9" stroke="#111" stroke-width="1" fill="none"/>
<g fill="#f4f4f4">
<rect x="683.2" y="587" width="1.4" height="1.2"/><rect x="686.2" y="587" width="1.4" height="1.2"/><rect x="689.3" y="587" width="1.4" height="1.2"/>
<rect x="683.1" y="590.1" width="1.6" height="1.6"/><rect x="686.1" y="590.1" width="1.6" height="1.6"/><rect x="689.2" y="590.1" width="1.6" height="1.6"/>
<rect x="683.1" y="593.2" width="1.6" height="1.6"/><rect x="686.1" y="593.2" width="1.6" height="1.6"/><rect x="689.2" y="593.2" width="1.6" height="1.6"/>
</g></svg>
<div style="position:absolute;left:707px;top:577px;width:23px;height:23px;box-sizing:border-box;border:1px solid #adadad;background:#e1e1e1"></div>
<svg style="position:absolute;left:709px;top:581px" width="18" height="16" viewBox="709 581 18 16">
<rect x="710.9" y="583.1" width="13.5" height="11.2" fill="none" stroke="#111" stroke-width="1.1"/>
<path d="M710.4 583.2H724.9" stroke="#111" stroke-width="1.8"/>
<path d="M717.6 583V594.3" stroke="#111" stroke-width="1.1"/>
</svg>
<div style="position:absolute;left:737px;top:577px;width:23px;height:23px;box-sizing:border-box;border:1px solid #adadad;background:#e1e1e1"></div>
<svg style="position:absolute;left:740.2px;top:580.9px" width="14.9" height="14.9" viewBox="128 128 1536 1536"><path d="M1152 1376v-160q0-14-9-23t-23-9h-96v-512q0-14-9-23t-23-9h-320q-14 0-23 9t-9 23v160q0 14 9 23t23 9h96v320h-96q-14 0-23 9t-9 23v160q0 14 9 23t23 9h448q14 0 23-9t9-23zm-128-896v-160q0-14-9-23t-23-9h-192q-14 0-23 9t-9 23v160q0 14 9 23t23 9h192q14 0 23-9t9-23zm640 416q0 209-103 385.500t-279.500 279.500-385.500 103-385.500-103-279.500-279.500-103-385.500 103-385.500 279.500-279.500 385.500-103 385.500 103 279.500 279.500 103 385.500z" fill="#000"/></svg>
</div>
</body></html>
